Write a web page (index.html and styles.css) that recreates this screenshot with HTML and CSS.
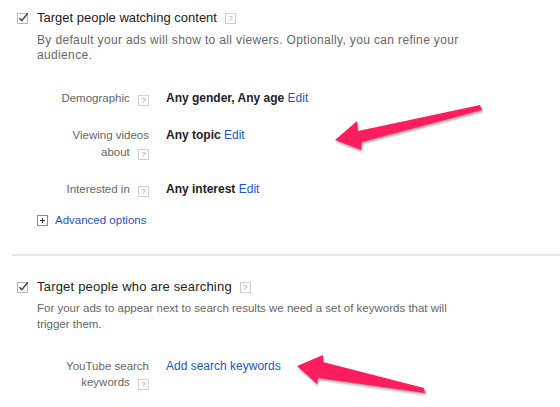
FILE: index.html
```html
<!DOCTYPE html>
<html lang="en">
<head>
    <meta charset="UTF-8">
    <title>Targeting</title>
    <link rel="stylesheet" href="styles.css">
</head>
<body>

    <div class="page">
        <section class="target">
            <div class="target-head">
                <svg class="check" width="12" height="12" viewBox="0 0 12 12">
                    <rect x="0.5" y="1.5" width="10" height="10" fill="#fff" stroke="#b5b5b5"/>
                    <path d="M2.5 6.2 L4.8 8.6 L10.8 1.2" fill="none" stroke="#444" stroke-width="1.5"/>
                </svg>
                Target people watching content <span class="help">?</span>
            </div>
            <p class="target-desc wide">By default your ads will show to all viewers. Optionally, you can refine your audience.</p>

            <div class="fields">
                <div class="field-label">Demographic <span class="help">?</span></div>
                <div class="field-value"><b>Any gender, Any age</b> <a href="#">Edit</a></div>

                <div class="field-label">Viewing videos about <span class="help">?</span></div>
                <div class="field-value"><b>Any topic</b> <a href="#">Edit</a></div>

                <div class="field-label">Interested in <span class="help">?</span></div>
                <div class="field-value"><b>Any interest</b> <a href="#">Edit</a></div>
            </div>

            <a href="#" class="advanced">
                <svg width="11" height="11" viewBox="0 0 11 11">
                    <rect x="0.5" y="0.5" width="10" height="10" fill="#fff" stroke="#8a8a8a"/>
                    <path d="M3 5.5 H8 M5.5 3 V8" stroke="#333" stroke-width="1"/>
                </svg>
                Advanced options
            </a>
        </section>

        <hr class="divider">

        <section class="target second">
            <div class="target-head">
                <svg class="check" width="12" height="12" viewBox="0 0 12 12">
                    <rect x="0.5" y="1.5" width="10" height="10" fill="#fff" stroke="#b5b5b5"/>
                    <path d="M2.5 6.2 L4.8 8.6 L10.8 1.2" fill="none" stroke="#444" stroke-width="1.5"/>
                </svg>
                Target people who are searching <span class="help">?</span>
            </div>
            <p class="target-desc">For your ads to appear next to search results we need a set of keywords that will trigger them.</p>

            <div class="fields">
                <div class="field-label">YouTube search keywords <span class="help">?</span></div>
                <div class="field-value"><a href="#">Add search keywords</a></div>
            </div>
        </section>

        <!-- annotation arrows drawn over the page -->
        <svg class="arrows" width="560" height="407" viewBox="0 0 560 407">
            <polygon points="335,140 357,121 358,131 480,105 482,110 362,142 361,150" fill="#ff1d5f"/>
            <polygon points="297,366 323,355 323,362 424,388 425,393 318,378 317,384" fill="#ff1d5f"/>
        </svg>
    </div>

</body>
</html>
```

FILE: styles.css
```css
body {
    margin: 0;
    background-color: #fff;
    font-family: "Liberation Sans", Arial, sans-serif;
    color: #222;
}

.page {
    position: relative;
    width: 560px;
    height: 407px;
    overflow: hidden;
}

.target {
    padding: 10px 0 0 17px;
}

.target.second {
    padding-top: 0;
    margin-top: 23px;
}

.target-head {
    display: flex;
    align-items: center;
    font-size: 13px;
    line-height: 16px;
    color: #222;
}

.second .target-head {
    letter-spacing: 0.2px;
}

.check {
    margin-right: 8px;
}

.help {
    display: inline-block;
    width: 9px;
    height: 9px;
    margin-left: 5px;
    border: 1px solid #cfcfcf;
    font-size: 8px;
    line-height: 9px;
    letter-spacing: 0;
    text-align: center;
    color: #999;
    vertical-align: -1px;
}

.target-head .help {
    margin-left: 8px;
}

.target-desc {
    margin: 5px 0 0 20px;
    font-size: 11.5px;
    line-height: 16px;
    color: #666;
    max-width: 425px;
}

.target-desc.wide {
    margin-top: 7px;
    font-size: 12px;
    letter-spacing: 0.35px;
    line-height: 15px;
    max-width: 440px;
}

.fields {
    display: grid;
    grid-template-columns: 90px auto;
    column-gap: 17px;
    row-gap: 20px;
    margin: 27px 0 0 42px;
}

.second .fields {
    margin-top: 26px;
}

.field-label {
    text-align: right;
    font-size: 11.5px;
    line-height: 17px;
    color: #666;
}

.second .field-label {
    line-height: 16px;
}

.field-value {
    font-size: 12px;
    line-height: 17px;
    color: #222;
}

a {
    color: #2255cc;
    text-decoration: none;
}

.advanced {
    display: flex;
    align-items: center;
    margin: 14px 0 0 20px;
    font-size: 11.5px;
    line-height: 17px;
}

.advanced svg {
    margin-right: 7px;
}

.divider {
    margin: 25px 0 0 12px;
    border: none;
    height: 2px;
    background-color: #e6e6e6;
}

.arrows {
    position: absolute;
    top: 0;
    left: 0;
    pointer-events: none;
    filter: drop-shadow(1px 2px 1px rgba(0, 0, 0, 0.35));
}
```
